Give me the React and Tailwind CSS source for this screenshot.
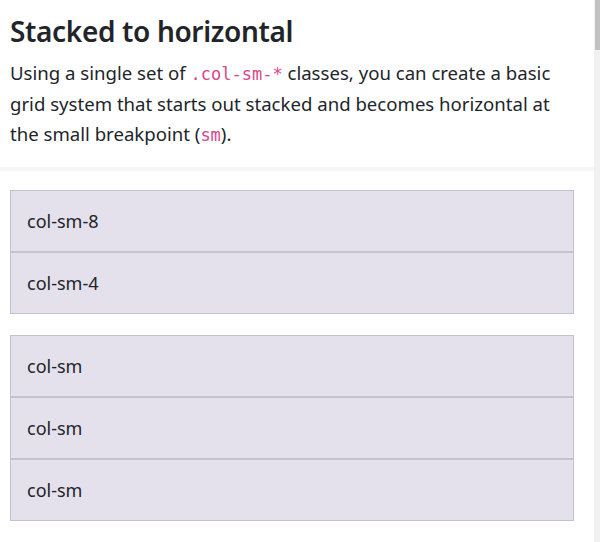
import React from 'react';

const rows = [
  ['col-sm-8', 'col-sm-4'],
  ['col-sm', 'col-sm', 'col-sm'],
];

function GridRow({ cols }) {
  return (
    <div className="flex flex-col">
      {cols.map((label, i) => (
        <div
          key={i}
          className="h-[62px] flex items-center pl-[16px] bg-[#e5e1ec] border border-[#c6c1d1] text-[18px] text-[#212529]"
        >
          {label}
        </div>
      ))}
    </div>
  );
}

export default function App() {
  return (
    <div
      className="flex h-[542px] w-[600px] overflow-hidden bg-white"
      style={{ fontFamily: '"Noto Sans", "Open Sans", sans-serif' }}
    >
      <div className="flex-1 flex flex-col">
        {/* Intro */}
        <div className="pl-[10px] pr-[20px] pt-[13px]">
          <h2 className="text-[28px] leading-[36px] font-semibold text-[#212529] tracking-[-0.35px]">
            Stacked to horizontal
          </h2>
          <p className="mt-[9px] text-[18.6px] leading-[30px] text-[#212529]">
            Using a single set of{' '}
            <code
              className="text-[#d6478a] text-[17px]"
              style={{ fontFamily: '"DejaVu Sans Mono", "Liberation Mono", monospace' }}
            >
              .col-sm-*
            </code>{' '}
            classes, you can create a basic grid system that starts out stacked and becomes horizontal at the small breakpoint (
            <code
              className="text-[#d6478a] text-[17px]"
              style={{ fontFamily: '"DejaVu Sans Mono", "Liberation Mono", monospace' }}
            >
              sm
            </code>
            ).
          </p>
        </div>

        <div className="mt-[17px] h-[4px] bg-[#f7f7f9]" />

        {/* Example */}
        <div className="pl-[10px] pr-[20px] pt-[19px] flex flex-col gap-[21px]">
          {rows.map((cols, i) => (
            <GridRow key={i} cols={cols} />
          ))}
        </div>
      </div>

      {/* Scrollbar */}
      <div className="w-[6px] bg-[#f1f1f1] flex flex-col items-end">
        <div className="w-[5px] h-[50px] bg-[#c1c1c1]" />
      </div>
    </div>
  );
}
